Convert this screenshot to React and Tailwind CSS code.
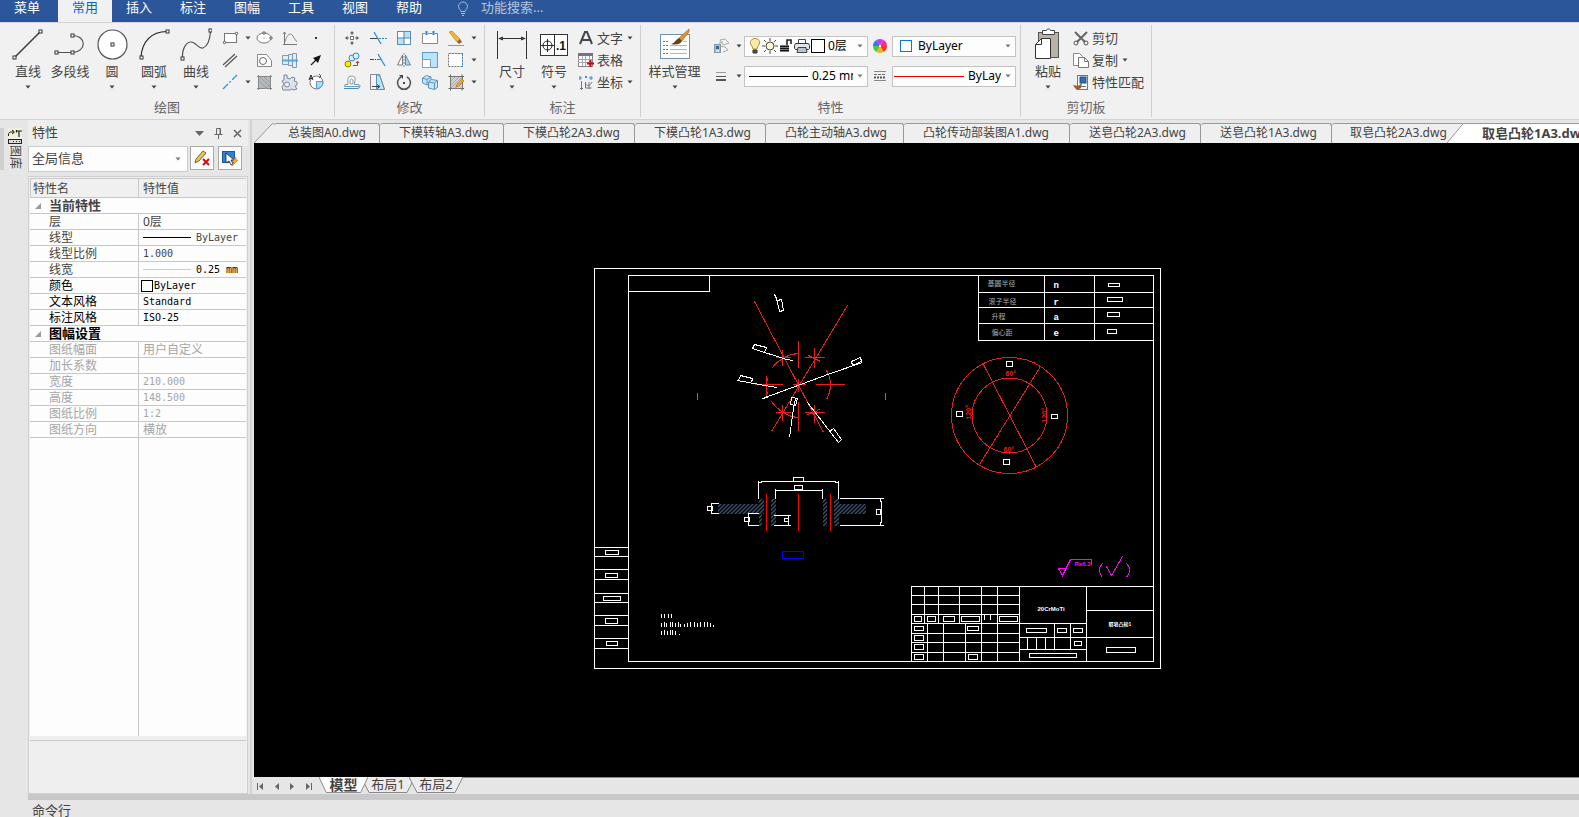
import { useState } from "react";

const Icon = ({ w = 18, h = 18, children }) => (
  <svg width={w} height={h} viewBox={`0 0 ${w} ${h}`} fill="none" stroke="#50555c" className="shrink-0" aria-hidden="true">
    {children}
  </svg>
);

const Caret = ({ color = "#444" }) => (
  <svg width="6" height="4" viewBox="0 0 6 4" className="shrink-0" aria-hidden="true">
    <path d="M.5 .5h5L3 3.500z" fill={color} />
  </svg>
);

const Node = ({ x, y }) => <rect x={x - 1.5} y={y - 1.5} width="3" height="3" fill="#fff" stroke="#333" strokeWidth="1" />;

/* ---------- ribbon icons ---------- */

const LineIcon = () => (
  <Icon w={32} h={34}>
    <path d="M3 30L29 4" stroke="#3c414a" strokeWidth="1.6" />
    <Node x={2.5} y={30.5} />
    <Node x={28.5} y={4.5} />
  </Icon>
);

const PolylineIcon = () => (
  <Icon w={32} h={34}>
    <path d="M2 25.500H18C33 25 33 8.500 18 8.500" strokeWidth="1.2" />
    <Node x={2.5} y={25.5} />
    <Node x={18.5} y={25.5} />
    <Node x={18.5} y={8.5} />
  </Icon>
);

const CircleIcon = () => (
  <Icon w={32} h={34}>
    <circle cx="16.500" cy="17.500" r="14.500" fill="#fff" strokeWidth="1.2" />
    <Node x={16.5} y={17.5} />
  </Icon>
);

const ArcIcon = () => (
  <Icon w={32} h={34}>
    <path d="M3 30C4 15 13 4.500 29 4.500" stroke="#222" strokeWidth="1.2" />
    <Node x={3.5} y={30.5} />
    <Node x={29.5} y={4.5} />
  </Icon>
);

const CurveIcon = () => (
  <Icon w={32} h={34}>
    <path d="M2.500 31C2 22 6 15 11 15C16 15 18 22 23 21C28 19 30 12 30.500 4" strokeWidth="1.2" />
    <Node x={2.5} y={31.5} />
    <Node x={30.5} y={3.5} />
  </Icon>
);

const RectIcon = () => (
  <Icon>
    <rect x="3.500" y="4.500" width="12" height="9" fill="#fff" stroke="#777" />
    <circle cx="3.500" cy="13.500" r="1.200" fill="#fff" />
    <circle cx="15.500" cy="4.500" r="1.200" fill="#fff" />
  </Icon>
);

const EllipseIcon = () => (
  <Icon>
    <ellipse cx="9" cy="9" rx="7" ry="5" fill="#fff" stroke="#777" />
    <circle cx="9" cy="4" r="1.200" fill="#fff" />
    <circle cx="16" cy="9" r="1.200" fill="#fff" />
    <path d="M9 8v2" stroke="#aaa" />
  </Icon>
);

const FormulaCurveIcon = () => (
  <Icon>
    <path d="M3.500 3v12.500M2 15.500h14" stroke="#777" />
    <path d="M4 13C6 5 10 2 13 9L16 13M2 5l1.500-2L5 5" stroke="#888" />
  </Icon>
);

const PointIcon = () => (
  <Icon>
    <rect x="8" y="8" width="2" height="2" fill="#333" stroke="none" />
  </Icon>
);

const ParallelIcon = () => (
  <Icon>
    <path d="M2 14L14 3M4 16L16 5" stroke="#555" strokeWidth="1.200" />
  </Icon>
);

const HoleIcon = () => (
  <Icon>
    <path d="M2.500 3.500h9l5 6v6h-14z" fill="#fff" stroke="#888" />
    <circle cx="8" cy="10" r="3.500" stroke="#666" />
  </Icon>
);

const ShaftIcon = () => (
  <Icon>
    <path d="M1.500 4.500h6v9h-6zM7.500 3.500h4v11h-4zM11.500 2.500h4v14h-4z" fill="#e4edf5" stroke="#7d9ab5" />
    <path d="M1 9.500h16" stroke="#58a6dc" strokeWidth="2" />
  </Icon>
);

const ArrowIcon = () => (
  <Icon>
    <path d="M4 14l5-5" stroke="#222" strokeWidth="1.300" />
    <path d="M14 4l-3 8-5-5z" fill="#111" stroke="none" />
  </Icon>
);

const CenterLineIcon = () => (
  <Icon>
    <path d="M2 16L16 2" stroke="#2e9ad6" strokeWidth="1.300" strokeDasharray="7 2 2 2" />
  </Icon>
);

const HatchIcon = () => (
  <Icon>
    <path d="M3.500 2v15M15.500 2v15M2 3.500h15M2 15.500h15" stroke="#888" />
    <rect x="4" y="4" width="11" height="11" fill="#b5b8bc" stroke="none" />
    <path d="M5 4l10 10M9 4l6 6M4 8l7 7M10 16l6-6" stroke="#9a9da2" />
  </Icon>
);

const GearIcon = () => (
  <Icon>
    <path
      d="M3 2h3v3l3 1 2-2 3 1-1 3 3 1v3l-2 1 2 3-3 1-2-1-2 1H2l-1-3 2-3-2-3 2-1z"
      fill="#d9e2ee"
      stroke="#7f8894"
    />
    <circle cx="6" cy="11.500" r="2.500" fill="#f1f1f1" stroke="#7f8894" />
  </Icon>
);

const RotatedViewIcon = () => (
  <Icon>
    <circle cx="9.500" cy="9.500" r="6.500" fill="#fff" stroke="#777" />
    <path d="M9.500 8.500h6c1 4-2 7-6 7z" fill="#a9dcf7" stroke="#5a9cc5" />
    <path d="M2 7l2-5 2 5M3 5.500h2" stroke="#222" />
    <path d="M12 1l2 2-2 2" stroke="#555" />
  </Icon>
);

const MoveIcon = () => (
  <Icon>
    <rect x="7.500" y="7.500" width="3" height="3" fill="#fff" stroke="#777" />
    <path d="M9 6V3M9 12v3M6 9H3M12 9h3" stroke="#666" />
    <path d="M9 2l2 2.500H7zM9 16l2-2.500H7zM2 9l2.500-2v4zM16 9l-2.500-2v4z" fill="#555" stroke="none" />
  </Icon>
);

const TrimIcon = () => (
  <Icon>
    <path d="M1 9.500h8" stroke="#444" />
    <path d="M10 9.500h8" stroke="#2e84d2" strokeDasharray="2 1" />
    <path d="M5 3l7 12" stroke="#2e84d2" strokeWidth="1.200" />
  </Icon>
);

const ArrayIcon = () => (
  <Icon>
    <rect x="2.500" y="2.500" width="13" height="13" fill="#fff" stroke="#5b8fb8" />
    <path d="M3 9h6v6H3zM9 3h6v6H9z" fill="#b8e2f8" stroke="none" />
    <path d="M9 2v14M2 9h14" stroke="#4c86b3" />
  </Icon>
);

const BreakIcon = () => (
  <Icon>
    <path d="M4 4.500H1.500v10h15v-10H14M7 4.500h4" fill="#fff" stroke="#888" />
    <path d="M5.500 2v4M12.500 2v4" stroke="#2e84d2" strokeWidth="2" />
  </Icon>
);

const EraseIcon = () => (
  <Icon>
    <path d="M1 16.500h16" stroke="#999" />
    <path d="M2 3l3-1 8 8-3 3z" fill="#f3b234" stroke="#b87b1c" strokeWidth=".6" />
    <path d="M10 13l3-3 2 3-3 2z" fill="#a05a3c" stroke="none" />
  </Icon>
);

const CopyObjIcon = () => (
  <Icon>
    <circle cx="5" cy="13" r="3" fill="#ffe600" stroke="#8a8200" />
    <circle cx="9" cy="7" r="3" fill="#d5efff" stroke="#3f87bd" />
    <circle cx="13" cy="5" r="3" fill="#d5efff" stroke="#3f87bd" />
    <path d="M10 14.500h4.500V11M13 12l1.500-2 1.500 2" stroke="#b33" />
  </Icon>
);

const ExtendIcon = () => (
  <Icon>
    <path d="M1 8.500h6M8 8.500h2" stroke="#444" strokeDasharray="4 1" />
    <path d="M9 8.500h3" stroke="#2e84d2" />
    <path d="M9 3l7 12" stroke="#2e84d2" strokeWidth="1.200" />
  </Icon>
);

const MirrorIcon = () => (
  <Icon>
    <path d="M7.500 4v10h-5z" fill="#fff" stroke="#777" />
    <path d="M10.500 4v10h5z" fill="#a9d4ee" stroke="#5b8fb8" />
    <path d="M9 2v14" stroke="#888" strokeDasharray="2 1" />
  </Icon>
);

const ScaleIcon = () => (
  <Icon>
    <rect x="1.500" y="1.500" width="15" height="15" fill="#b9e4f8" stroke="#5b9cc8" />
    <rect x="1.500" y="8.500" width="8" height="8" fill="#fff" stroke="#8a9fb0" />
  </Icon>
);

const StretchIcon = () => (
  <Icon>
    <rect x="1.500" y="2.500" width="14" height="13" fill="#fff" stroke="#777" strokeDasharray="2 1" />
    <path d="M2 2.500h14M15.500 3v13" stroke="#3a8fd0" strokeDasharray="2 1" />
  </Icon>
);

const OffsetIcon = () => (
  <Icon>
    <path d="M2 11.500h3c0-3-1-7 2-8s6 0 5 4l-1 4h5v2H1.500z" fill="#fff" stroke="#7d98ae" />
    <path d="M1 15.500h13c2 0 3-1 3-3" stroke="#3a8fd0" />
    <path d="M7 11c0-2 0-5 1.500-5s2 3 1 5z" stroke="#7d98ae" />
  </Icon>
);

const ChamferIcon = () => (
  <Icon>
    <path d="M1.500 1.500h9l5 15h-14z" fill="#f5f5f5" stroke="#888" />
    <path d="M7.500 2h3l5 14.500h-8z" fill="#b9e4f8" stroke="#5b8fb8" />
    <path d="M3 13.500h7M8 11.500l3 2-3 2" stroke="#444" />
  </Icon>
);

const RotateIcon = () => (
  <Icon>
    <path d="M12 4a6.500 6.500 0 1 1-6 0" stroke="#555" strokeWidth="1.600" />
    <path d="M4 2h4v4z" fill="#444" stroke="none" />
    <rect x="8" y="9" width="2" height="2" fill="#444" stroke="none" />
  </Icon>
);

const ExplodeIcon = () => (
  <Icon>
    <path d="M1.500 5l4-2.500L10 4v6l-4 2-4.500-2zM1.500 5L6 6.500v5M6 6.500L10 4" fill="#c6e6f8" stroke="#5b93bb" />
    <path d="M7.500 9l3-2.500 6 1v7l-3 2-6-1.500zM7.500 9l6 1v6M13.500 10l3-2.500" fill="#c6e6f8" stroke="#5b93bb" />
  </Icon>
);

const HatchEditIcon = () => (
  <Icon>
    <rect x="3.500" y="3.500" width="12" height="12" fill="#cfd1d3" stroke="#777" />
    <path d="M4 8l4-4M4 12l8-8M4 15L15 4M8 15l7-7" stroke="#a5a5a5" />
    <path d="M1.500 3.500h2v-2M1.500 15.500h2v2M17 3.500h-2v-2M17 15.500h-2v2" stroke="#666" />
    <path d="M10 11l5-5 2 2-5 5-3 1z" fill="#e8a63a" stroke="#9a6b1e" strokeWidth=".6" />
  </Icon>
);

const DimensionIcon = () => (
  <Icon w={32} h={34}>
    <path d="M1.500 4v28M30.500 4v28M3 11.500h26" stroke="#333" />
    <path d="M2 11.500l5-2v4zM30 11.500l-5-2v4z" fill="#333" stroke="none" />
  </Icon>
);

const SymbolIcon = () => (
  <Icon w={30} h={34}>
    <rect x="1.500" y="7.500" width="27" height="21" fill="#fff" stroke="#333" />
    <path d="M15.500 8v20M2 18.500h13M8.500 12v13" stroke="#333" />
    <circle cx="8.500" cy="18.500" r="4.500" stroke="#222" />
    <text x="17" y="23" fill="#111" stroke="none" fontSize="12" fontWeight="700" fontFamily="Liberation Sans, sans-serif">
      .1
    </text>
  </Icon>
);

const TextIcon = () => (
  <Icon>
    <path d="M3 15L8 3h2l5 12M5 11h8" stroke="#43474f" strokeWidth="2" />
  </Icon>
);

const TableIcon = () => (
  <Icon>
    <rect x="1.500" y="2.500" width="14" height="13" fill="#fff" stroke="#888" />
    <path d="M1 2h15v3H1z" fill="#6d7682" stroke="none" />
    <path d="M1 8.500h14M1 11.500h14M5.500 5v10M8.500 5v10M12.500 5v10" stroke="#aaa" />
    <path d="M13.500 9v7M10 12.500h7" stroke="#c00d0d" strokeWidth="2" />
  </Icon>
);

const CoordIcon = () => (
  <Icon>
    <path d="M4.500 8v9M3 15.500h3M8.500 9v6h6M8 10c2 4 5 3 7-1M12 9v7" stroke="#777" />
    <path d="M2 5h3M3 3v4M8 3l2 2M10 3L8 5M14 3v4M12 5h4" stroke="#3a8fd0" />
  </Icon>
);

const StyleIcon = () => (
  <Icon w={32} h={34}>
    <rect x="1.500" y="7.500" width="29" height="24" fill="#fff" stroke="#6f93b3" />
    <path d="M4 14.500h5M4 18.500h5M4 22.500h5M4 26.500h5" stroke="#777" strokeDasharray="2 1" />
    <path d="M11 18.500h17M11 22.500h17M11 26.500h17M24 14.500h4" stroke="#a9bccd" />
    <path d="M30 2L20 11l3 3 7-9z" fill="#e0932f" stroke="#9a5f1c" strokeWidth=".6" />
    <path d="M20 11l3 3c-2 4-7 4-11 3 4-1 4-4 8-6z" fill="#6b3f1d" stroke="none" />
  </Icon>
);

const LayersIcon = () => (
  <Icon>
    <path d="M8 3l5-1 4 4-6 2zM7 6l4-1M7 9l6 1 3 3-5 2" fill="#f4f4f4" stroke="#aaa" />
    <rect x="2.500" y="7.500" width="6" height="8" fill="#a9bfd4" stroke="#8796a5" />
    <rect x="4" y="9" width="3" height="3" fill="#2d6aa3" stroke="none" />
    <path d="M4 14h3" stroke="#fff" />
  </Icon>
);

const LineWidthIcon = () => (
  <Icon>
    <path d="M4 5.500h10" stroke="#999" />
    <path d="M4 9.500h10" stroke="#555" />
    <path d="M4 13h10" stroke="#555" strokeWidth="2" />
  </Icon>
);

const BulbIcon = () => (
  <Icon w={12}>
    <path d="M6 1.500c6 0 5 6 3 7.500l-1 3H4L3 9C0 7 1 1.500 6 1.500z" fill="#ffe9a0" stroke="#a98f45" />
    <path d="M4 13h4v3H4z" fill="#555" stroke="#333" />
  </Icon>
);

const SunIcon = () => (
  <Icon w={16}>
    <circle cx="8" cy="9" r="4" fill="#fff6cf" stroke="#444" />
    <path d="M8 1v3M8 14v3M0 9h3M13 9h3M2 3l2 2M12 13l2 2M14 3l-2 2M2 15l2-2" stroke="#444" />
  </Icon>
);

const UnlockIcon = () => (
  <Icon w={14}>
    <path d="M8 9V3h4v4" stroke="#222" strokeWidth="1.600" />
    <path d="M1 8h9v7H1z" fill="#8d8d00" stroke="none" />
    <path d="M1 9.500h9M1 11.500h9M1 13.500h9" stroke="#111" />
  </Icon>
);

const PrinterIcon = () => (
  <Icon w={16}>
    <path d="M4.500 6V2.500h7V6" fill="#fff" stroke="#444" />
    <path d="M1.500 6.500h13l1 2v3l-1 1h-13l-1-1v-3z" fill="#dfe5ec" stroke="#333" />
    <path d="M4 10.500h8l1 5H3z" fill="#b8c4d0" stroke="#444" />
  </Icon>
);

const ColorWheelIcon = () => (
  <Icon w={16} h={16}>
    <g stroke="none">
      <path d="M8 8L4.500 2a7 7 0 0 1 7 0z" fill="#c93bf0" />
      <path d="M8 8L11.500 2A7 7 0 0 1 15 8z" fill="#f0308c" />
      <path d="M8 8h7a7 7 0 0 1-3.500 6z" fill="#f23a24" />
      <path d="M8 8l3.500 6a7 7 0 0 1-7 0z" fill="#f5b01e" />
      <path d="M8 8l-3.500 6A7 7 0 0 1 1 8z" fill="#4fc73f" />
      <path d="M8 8H1a7 7 0 0 1 3.500-6z" fill="#3a74f0" />
      <circle cx="8" cy="8" r="1" fill="#fff" />
    </g>
  </Icon>
);

const LineTypeIcon = () => (
  <Icon w={16} h={16}>
    <path d="M2 3.500h12M2 12.500h12" stroke="#888" />
    <path d="M2 6.500h12" stroke="#666" strokeDasharray="3 1" />
    <path d="M2 9.500h12" stroke="#555" strokeWidth="2" strokeDasharray="2 1" />
  </Icon>
);

const PasteIcon = () => (
  <Icon w={30} h={34}>
    <rect x="5.500" y="5.500" width="20" height="25" fill="#b9b2a4" stroke="#555" />
    <path d="M9.500 3.500h4c0-2 4-2 4 0h4v4h-12z" fill="#fff" stroke="#444" />
    <path d="M2.500 17.500l6-6h9v20h-15z" fill="#fff" stroke="#333" />
    <path d="M2.500 17.500h6v-6" stroke="#333" />
  </Icon>
);

const CutIcon = () => (
  <Icon>
    <path d="M3 3l10 10M15 3L5 13" stroke="#666" strokeWidth="2" />
    <circle cx="4" cy="14" r="2" stroke="#555" />
    <circle cx="14" cy="14" r="2" stroke="#555" />
  </Icon>
);

const CopyIcon = () => (
  <Icon>
    <path d="M1.500 2.500h6l3 3v9h-9z" fill="#fff" stroke="#888" />
    <path d="M6.500 6.500h6l4 4v6h-10z" fill="#fff" stroke="#777" />
    <path d="M12.500 6.500v4h4" stroke="#777" />
  </Icon>
);

const MatchIcon = () => (
  <Icon>
    <rect x="5.500" y="2.500" width="10" height="14" fill="#fff" stroke="#6d7682" />
    <rect x="8" y="4" width="6" height="6" fill="#2f6fae" stroke="#1f4f80" />
    <path d="M8 13.500h6" stroke="#777" />
    <path d="M1 12l5 1 4-3-1 5-4 2-2-2z" fill="#a4592b" stroke="none" />
  </Icon>
);

/* ---------- ribbon building blocks ---------- */

const BigButton = ({ icon, label, caret = true, className = "w-[42px]" }) => (
  <button type="button" className={`flex h-[68px] flex-col items-center whitespace-nowrap ${className}`}>
    <span className="flex h-[34px] items-center">{icon}</span>
    <span className="leading-5">{label}</span>
    {caret && (
      <span className="mt-1">
        <Caret />
      </span>
    )}
  </button>
);

const SmallButton = ({ icon, title, caret }) => (
  <button type="button" title={title} aria-label={title} className="flex h-[22px] items-center gap-[6px] pl-1">
    {icon}
    {caret && <Caret />}
  </button>
);

const LabelButton = ({ icon, label, caret }) => (
  <button type="button" className="flex h-[22px] items-center gap-[2px] whitespace-nowrap">
    {icon}
    <span className="leading-5">{label}</span>
    {caret && (
      <span className="ml-[2px]">
        <Caret />
      </span>
    )}
  </button>
);

const Group = ({ title, className, children }) => (
  <section aria-label={title} className={`my-[2px] flex shrink-0 flex-col border-r border-[#d0d0d0] ${className}`}>
    <div className="flex flex-1 items-start pt-[2px]">{children}</div>
    <div className="h-5 text-center leading-5 text-[#666]">{title}</div>
  </section>
);

const Combo = ({ label, options, children }) => (
  <div className="flex h-[21px] w-[124px] items-center overflow-hidden border border-[#c3c3c3] bg-[#fdfdfd] pr-1 text-xs text-black">
    {children}
    <select aria-label={label} className="mr-1 h-[19px] w-0 min-w-0 flex-1 appearance-none bg-transparent pl-[3px] outline-none">
      {options.map((o) => (
        <option key={o}>{o}</option>
      ))}
    </select>
    <Caret color="#777" />
  </div>
);

const menus = ["菜单", "常用", "插入", "标注", "图幅", "工具", "视图", "帮助"];

const MenuBar = () => {
  const [active, setActive] = useState("常用");

  return (
    <header className="flex h-[22px] shrink-0 items-start overflow-hidden bg-[#2b579a]">
      <nav className="flex">
        {menus.map((m) => (
          <button
            key={m}
            type="button"
            onClick={() => setActive(m)}
            className={`h-[22px] w-[54px] pb-2 text-center leading-[14px] ${m === "菜单" ? "mr-1" : ""} ${
              active === m ? "bg-[#f1f1f1] text-[#0a64c8]" : "text-white"
            }`}
          >
            {m}
          </button>
        ))}
      </nav>
      <label className="ml-5 flex h-4 flex-1 items-center gap-[11px] text-[#b5c5de]">
        <svg width="14" height="16" viewBox="0 0 14 16" fill="none" stroke="#a9bcd9" className="shrink-0">
          <path d="M5 11.500C5 10 2.500 9 2.500 6.500a4.500 4.500 0 0 1 9 0C11.500 9 9 10 9 11.500zM5 13.500h4M6 15.500h2" />
        </svg>
        <input
          aria-label="功能搜索"
          placeholder="功能搜索..."
          className="h-4 w-40 bg-transparent outline-none placeholder:text-[#b5c5de]"
        />
      </label>
    </header>
  );
};

const Ribbon = () => (
  <div className="flex h-[98px] shrink-0 overflow-hidden border-y border-[#d4d4d4] bg-[#f1f1f1]">
    <Group title="绘图" className="w-[335px]">
      <div className="flex pl-[7px]">
        <BigButton icon={<LineIcon />} label="直线" />
        <BigButton icon={<PolylineIcon />} label="多段线" caret={false} />
        <BigButton icon={<CircleIcon />} label="圆" />
        <BigButton icon={<ArcIcon />} label="圆弧" />
        <BigButton icon={<CurveIcon />} label="曲线" />
      </div>
      <div className="grid grid-cols-[34px_26px_26px_26px]">
        <SmallButton icon={<RectIcon />} title="矩形" caret />
        <SmallButton icon={<EllipseIcon />} title="椭圆" />
        <SmallButton icon={<FormulaCurveIcon />} title="公式曲线" />
        <SmallButton icon={<PointIcon />} title="点" />
        <SmallButton icon={<ParallelIcon />} title="平行线" />
        <SmallButton icon={<HoleIcon />} title="局部放大" />
        <SmallButton icon={<ShaftIcon />} title="孔/轴" />
        <SmallButton icon={<ArrowIcon />} title="箭头" />
        <SmallButton icon={<CenterLineIcon />} title="中心线" caret />
        <SmallButton icon={<HatchIcon />} title="剖面线" />
        <SmallButton icon={<GearIcon />} title="齿轮" />
        <SmallButton icon={<RotatedViewIcon />} title="视图" />
      </div>
    </Group>

    <Group title="修改" className="w-[150px]">
      <div className="grid grid-cols-[26px_26px_26px_26px_36px] pl-1">
        <SmallButton icon={<MoveIcon />} title="平移" />
        <SmallButton icon={<TrimIcon />} title="裁剪" />
        <SmallButton icon={<ArrayIcon />} title="阵列" />
        <SmallButton icon={<BreakIcon />} title="打断" />
        <SmallButton icon={<EraseIcon />} title="删除" caret />
        <SmallButton icon={<CopyObjIcon />} title="平移复制" />
        <SmallButton icon={<ExtendIcon />} title="延伸" />
        <SmallButton icon={<MirrorIcon />} title="镜像" />
        <SmallButton icon={<ScaleIcon />} title="缩放" />
        <SmallButton icon={<StretchIcon />} title="拉伸" caret />
        <SmallButton icon={<OffsetIcon />} title="等距线" />
        <SmallButton icon={<ChamferIcon />} title="过渡" />
        <SmallButton icon={<RotateIcon />} title="旋转" />
        <SmallButton icon={<ExplodeIcon />} title="分解" />
        <SmallButton icon={<HatchEditIcon />} title="编辑" caret />
      </div>
    </Group>

    <Group title="标注" className="w-[156px]">
      <div className="flex pl-[6px]">
        <BigButton icon={<DimensionIcon />} label="尺寸" />
        <BigButton icon={<SymbolIcon />} label="符号" />
      </div>
      <div className="flex flex-col pl-[2px]">
        <LabelButton icon={<TextIcon />} label="文字" caret />
        <LabelButton icon={<TableIcon />} label="表格" />
        <LabelButton icon={<CoordIcon />} label="坐标" caret />
      </div>
    </Group>

    <Group title="特性" className="w-[380px]">
      <BigButton icon={<StyleIcon />} label="样式管理" className="w-[67px]" />
      <div className="grid grid-cols-[36px_124px_24px_124px] items-center gap-y-2 pt-2">
        <SmallButton icon={<LayersIcon />} title="图层" caret />
        <Combo label="图层选择" options={["0层"]}>
          <span className="flex items-center gap-[1px] pl-1">
            <BulbIcon />
            <SunIcon />
            <UnlockIcon />
            <PrinterIcon />
            <span className="size-[14px] border border-black bg-white" />
          </span>
        </Combo>
        <span className="flex justify-center">
          <ColorWheelIcon />
        </span>
        <Combo label="颜色" options={["ByLayer"]}>
          <span className="mr-[3px] ml-[7px] size-3 shrink-0 border border-[#0a78d7] bg-white" />
        </Combo>
        <SmallButton icon={<LineWidthIcon />} title="线宽" caret />
        <Combo label="线宽选择" options={["0.25 mm"]}>
          <span className="mr-[1px] ml-1 h-px w-[59px] shrink-0 bg-black" />
        </Combo>
        <span className="flex justify-center">
          <LineTypeIcon />
        </span>
        <Combo label="线型" options={["ByLayer"]}>
          <span className="mr-[1px] ml-[1px] h-px w-[70px] shrink-0 bg-[#e00]" />
        </Combo>
      </div>
    </Group>

    <Group title="剪切板" className="w-[131px]">
      <BigButton icon={<PasteIcon />} label="粘贴" className="w-[51px] pl-[3px]" />
      <div className="flex flex-col">
        <LabelButton icon={<CutIcon />} label="剪切" />
        <LabelButton icon={<CopyIcon />} label="复制" caret />
        <LabelButton icon={<MatchIcon />} label="特性匹配" />
      </div>
    </Group>
  </div>
);

/* ---------- property panel ---------- */

const currentProps = [
  { name: "层", value: "0层", tone: "text-[#444]" },
  { name: "线型", value: "ByLayer", tone: "text-[#444]", line: "bg-black" },
  { name: "线型比例", value: "1.000", tone: "text-[#444]" },
  { name: "线宽", value: "0.25 mm", tone: "text-[#444]", valueTone: "text-black", line: "bg-[#ccc]" },
  { name: "颜色", value: "ByLayer", tone: "text-black", swatch: true },
  { name: "文本风格", value: "Standard", tone: "text-black" },
  { name: "标注风格", value: "ISO-25", tone: "text-black" },
];

const sheetProps = [
  { name: "图纸幅面", value: "用户自定义" },
  { name: "加长系数", value: "" },
  { name: "宽度", value: "210.000" },
  { name: "高度", value: "148.500" },
  { name: "图纸比例", value: "1:2" },
  { name: "图纸方向", value: "横放" },
];

const hasLatin = (v) => /^[\x20-\x7e]+$/.test(v);

const PropRow = ({ row }) => (
  <tr className={row.tone || "text-[#a5a5a5]"}>
    <th scope="row" className="h-4 border-r border-b border-[#c8c8c8] pl-[19px] text-left font-normal">
      {row.name}
    </th>
    <td className={`h-4 border-b border-[#c8c8c8] pl-1 ${row.valueTone || ""}`}>
      <span className="flex h-[15px] items-center">
        {row.line && <span className={`mr-[5px] h-px w-12 ${row.line}`} />}
        {row.swatch && <span className="mr-[1px] -ml-[2px] size-3 border border-black bg-white" />}
        <span className={hasLatin(row.value) ? "font-['DejaVu_Sans_Mono',monospace] text-[10px]" : ""}>{row.value}</span>
      </span>
    </td>
  </tr>
);

const SectionRow = ({ title, tone }) => (
  <tr className={tone}>
    <th colSpan={2} scope="colgroup" className="h-4 border-b border-[#c8c8c8] pl-[5px] text-left text-[13px]">
      <span className="flex h-[15px] items-center gap-2">
        <svg width="6" height="6" viewBox="0 0 6 6">
          <path d="M6 0v6H0z" fill="#999" />
        </svg>
        {title}
      </span>
    </th>
  </tr>
);

const PropertyPanel = () => (
  <aside className="flex w-[220px] shrink-0 flex-col">
    <div className="flex h-[26px] items-center bg-[#eee] pr-[6px] pl-1">
      <h2 className="flex-1 text-[#444]">特性</h2>
      <button type="button" aria-label="菜单" className="mr-[9px]">
        <svg width="10" height="5" viewBox="0 0 10 5">
          <path d="M0 0h9L4.500 5z" fill="#666" />
        </svg>
      </button>
      <button type="button" aria-label="固定" className="mr-[10px]">
        <svg width="9" height="11" viewBox="0 0 9 11" fill="none" stroke="#666">
          <path d="M2.500 6V.5h4V6M6 1v5M.5 6.500h8M4.500 7v4" />
        </svg>
      </button>
      <button type="button" aria-label="关闭">
        <svg width="9" height="9" viewBox="0 0 9 9" fill="none" stroke="#666" strokeWidth="1.600">
          <path d="M1 1l7 7M8 1L1 8" />
        </svg>
      </button>
    </div>

    <div className="flex h-[30px] items-start gap-[2px]">
      <div className="flex h-[26px] w-[160px] items-center border border-[#ccc] bg-[#fdfdfd] pr-[6px]">
        <select aria-label="选择集" className="min-w-0 flex-1 appearance-none bg-transparent pl-[3px] text-[#444] outline-none">
          <option>全局信息</option>
        </select>
        <Caret color="#777" />
      </div>
      <button type="button" aria-label="取消选择" className="grid size-6 place-items-center border border-[#aaa] bg-[#fdfdfd]">
        <Icon>
          <path d="M2 14l1-4 7-8 3 2-7 8z" fill="#f2c14e" stroke="#5a4520" strokeWidth=".8" />
          <path d="M10 10l6 6M16 10l-6 6" stroke="#d01010" strokeWidth="2" />
        </Icon>
      </button>
      <button type="button" aria-label="快速选择" className="ml-[2px] grid size-6 place-items-center border border-[#aaa] bg-[#fdfdfd]">
        <Icon>
          <rect x="1.500" y="2.500" width="12" height="11" fill="#2f80d0" stroke="#1c5c9c" />
          <path d="M5 4v10l3-2 2 4 2-1-2-4h3z" fill="#fff" stroke="#222" strokeWidth=".8" />
          <path d="M15 8l-4 5h2l-2 4 6-6h-2z" fill="#ffb020" stroke="#d07810" strokeWidth=".6" />
        </Icon>
      </button>
    </div>

    <div className="flex flex-1 flex-col border border-[#d0d0d0] bg-[#efefef] p-[1px] text-xs leading-[15px]">
      <table className="w-full table-fixed border-separate border-spacing-0 bg-[#fdfdfd]">
        <colgroup>
          <col className="w-[109px]" />
          <col />
        </colgroup>
        <thead>
          <tr className="bg-[#f0f0f0] text-[#444]">
            <th scope="col" className="h-5 border border-[#c8c8c8] pl-[2px] text-left font-normal">
              特性名
            </th>
            <th scope="col" className="h-5 border-y border-[#c8c8c8] pl-1 text-left font-normal">
              特性值
            </th>
          </tr>
        </thead>
        <tbody>
          <SectionRow title="当前特性" tone="text-[#444]" />
          {currentProps.map((row) => (
            <PropRow key={row.name} row={row} />
          ))}
          <SectionRow title="图幅设置" tone="text-black" />
          {sheetProps.map((row) => (
            <PropRow key={row.name} row={row} />
          ))}
        </tbody>
      </table>
      <div className="flex flex-1 bg-[#fdfdfd]">
        <div className="w-[109px] border-r border-[#c8c8c8]" />
      </div>
      <div className="mt-1 h-[52px] border-t border-[#c8c8c8]" />
    </div>
  </aside>
);

const SideStrip = () => (
  <div className="flex w-7 shrink-0 items-start gap-1 pt-2">
    <span className="h-[42px] w-1 bg-[#cfcfcf]" />
    <button type="button" className="flex w-[14px] flex-col items-center gap-[1px]">
      <svg width="14" height="16" viewBox="0 0 14 16" fill="none" stroke="#222" className="bg-[#f0f0dc]">
        <path d="M.5 8V5.500L2 4h4M4 2l2.500 2L4 6" />
        <path d="M8 3h6M11 3v6M8.500 2v2.500" strokeWidth="1.200" />
        <rect x=".5" y="11.500" width="13" height="4" fill="#ddd" />
        <path d="M5 13.500h1M8 13.500h1M11 13.500h1" />
      </svg>
      <span className="w-[14px] text-xs leading-[14px] text-[#444] [text-orientation:sideways] [writing-mode:vertical-rl]">图库</span>
    </button>
  </div>
);

/* ---------- document area ---------- */

const docs = [
  { name: "总装图A0.dwg", width: "w-[106px]", pad: "pl-[14px]" },
  { name: "下模转轴A3.dwg", width: "w-[124px]", pad: "pl-[19px]" },
  { name: "下模凸轮2A3.dwg", width: "w-[131px]", pad: "pl-[19px]" },
  { name: "下模凸轮1A3.dwg", width: "w-[131px]", pad: "pl-[19px]" },
  { name: "凸轮主动轴A3.dwg", width: "w-[138px]", pad: "pl-[19px]" },
  { name: "凸轮传动部装图A1.dwg", width: "w-[166px]", pad: "pl-[19px]" },
  { name: "送皂凸轮2A3.dwg", width: "w-[131px]", pad: "pl-[19px]" },
  { name: "送皂凸轮1A3.dwg", width: "w-[131px]", pad: "pl-[19px]" },
  { name: "取皂凸轮2A3.dwg", width: "w-[115px]", pad: "pl-[18px]", last: true },
];

const DocTabs = () => (
  <div className="flex h-[23px] shrink-0 items-end overflow-hidden text-[#444]">
    <svg width="20" height="20" viewBox="0 0 20 20" className="shrink-0">
      <path d="M0 20L17 2Q18 .5 20 .5V20z" fill="#efefef" />
      <path d="M0 20L17 2Q18 .5 20 .5" fill="none" stroke="#999" />
    </svg>
    {docs.map((d) => (
      <button
        key={d.name}
        type="button"
        className={`h-5 shrink-0 border-t border-[#999] bg-[#efefef] pb-[2px] text-left text-xs whitespace-nowrap ${d.width} ${d.pad} ${
          d.last ? "rounded-tl-[3px]" : "rounded-t-[3px] border-r"
        }`}
      >
        {d.name}
      </button>
    ))}
    <svg width="18" height="20" viewBox="0 0 18 20" className="shrink-0">
      <path d="M0 .5H18V20H0z" fill="#efefef" />
      <path d="M0 20L15 2Q16 .5 18 .5V20z" fill="#fff" />
      <path d="M0 .5h16M0 20L15 2Q16 .5 18 .5" fill="none" stroke="#999" />
    </svg>
    <button type="button" className="h-5 flex-1 border-t border-[#999] bg-white pb-[2px] pl-[17px] text-left font-bold whitespace-nowrap">
      取皂凸轮1A3.dwg
    </button>
  </div>
);

// [x, y, w, h] in drawing units
const Boxes = ({ items }) => items.map(([x, y, w, h]) => <rect key={`${x}-${y}`} x={x} y={y} width={w} height={h} />);

const Drawing = () => (
  <svg
    viewBox="254 143 1325 634"
    className="block h-full w-full"
    fill="none"
    stroke="#fff"
    shapeRendering="crispEdges"
    role="img"
    aria-label="取皂凸轮1A3.dwg"
  >
    <defs>
      <pattern id="hatch" width="4" height="4" patternUnits="userSpaceOnUse">
        <path d="M-1 5L5 -1M-1 1L1 -1M3 5L5 3" stroke="#6aa3dc" strokeWidth="1" />
      </pattern>
    </defs>
    <g transform="translate(0.5 0.5)">
      {/* frames */}
      <rect x="594" y="268" width="566" height="400" />
      <rect x="628" y="275" width="525" height="386" />
      <path d="M628 291H709V275" />
      <path d="M594 547h34M594 556h34M594 569h34M594 579h34M594 593h34M594 602h34M594 615h34M594 625h34M594 638h34M594 648h34" />
      <Boxes
        items={[
          [605, 550, 13, 4],
          [605, 573, 12, 4],
          [603, 596, 17, 4],
          [605, 618, 12, 5],
          [606, 641, 11, 4],
        ]}
      />

      {/* cam parameters */}
      <path d="M978 275V340H1153M978 292H1153M978 307H1153M978 323H1153M1044 275V340M1094 275V340" />
      <Boxes
        items={[
          [1108, 283, 11, 3],
          [1107, 297, 15, 4],
          [1107, 312, 12, 4],
          [1107, 329, 9, 4],
        ]}
      />
      <g fill="#aaa" stroke="none" fontSize="7" fontFamily="Liberation Serif, Noto Sans CJK SC, serif">
        <text x="987" y="285">基圆半径</text>
        <text x="988" y="303">滚子半径</text>
        <text x="991" y="318">升程</text>
        <text x="991" y="334">偏心距</text>
      </g>
      <g fill="#fff" stroke="none" fontSize="9" fontWeight="700" fontFamily="Liberation Mono, monospace">
        <text x="1053" y="287">n</text>
        <text x="1053" y="304">r</text>
        <text x="1053" y="319">a</text>
        <text x="1053" y="335">e</text>
      </g>

      {/* cam profile */}
      <g stroke="#f01a1a">
        <path d="M754 301L823 432M847 305L771 431M798 340V367M798 378V391M792 384H805M798 401V430" />
        <path d="M775 357H790M782 349V365M804 357H824M814 347V367M754 384H782M766 375V395M815 384H844" />
        <path d="M775 412H790M782 404V420M804 412H824M814 404V422" />
        <path d="M771 368Q782 354 798 353M826 370Q834 384 826 399M771 401Q782 416 798 417" />
        <path d="M808 355L820 361M820 408L814 412L807 414M767 378Q765 386 767 394" />
      </g>
      <path d="M774 294L776 298L779 311L783 310L781 299L777 300" />
      <path d="M793 360L786 359L752 348L754 344L766 347L764 352" />
      <path d="M777 387L770 386L737 380H738L740 375L752 378L751 382" />
      <path d="M768 397L762 398L830 373L862 362M851 361L860 357L861 361L852 365Z" />
      <path d="M795 398L793 408L789 437M791 397L797 398L795 405L790 404Z" />
      <path d="M807 402L838 442L841 439L833 428L829 431" />
      <path d="M697 392V399M885 392V399" stroke="#c86400" />

      {/* stroke diagram */}
      <g stroke="#f01a1a">
        <circle cx="1009" cy="415" r="58" />
        <circle cx="1009" cy="415" r="37.500" />
        <path d="M983 364L1036 467M1040 366L979 464" />
      </g>
      <Boxes
        items={[
          [1006, 361, 6, 5],
          [956, 411, 6, 5],
          [1051, 414, 6, 4],
          [1003, 459, 6, 5],
        ]}
      />
      <g fill="#f01a1a" stroke="none" fontSize="7" fontWeight="700" fontFamily="Liberation Sans, sans-serif">
        <text x="1005" y="375">60°</text>
        <text x="1003" y="451">60°</text>
        <text transform="translate(970 419) rotate(-90)">120°</text>
        <text transform="translate(1046 422) rotate(-90)">120°</text>
      </g>

      {/* section */}
      <path
        d="M717 503H763V513H717zM758 498H763V503H758zM758 513H761V525H758zM770 498H775V525H770zM822 498H826V525H822zM833 498H838V525H833zM838 503H865V513H838z"
        fill="url(#hatch)"
        stroke="none"
      />
      <path d="M758 498V480M758 482h3v-1h74v1h3M838 480V498M775 498V488M775 490H822M822 488V498" />
      <path d="M710 503h8M710 513h8M711 503v10M747 513h11M747 525h11M748 513v12M773 515h17M773 525h17M788 515v10" />
      <path d="M839 498h44M839 525h44M880 498v3h1v21h-1v3" />
      <Boxes
        items={[
          [793, 477, 10, 4],
          [794, 485, 8, 4],
          [707, 506, 5, 4],
          [744, 517, 5, 4],
          [784, 518, 4, 3],
          [876, 509, 4, 5],
        ]}
      />
      <path d="M766 493V530M798 493V530M830 493V530" stroke="#f00" />
      <rect x="782" y="551" width="21" height="7" stroke="#00f" />

      {/* roughness mark */}
      <g stroke="#f0f">
        <path d="M1065 568H1058L1062 575L1070 559H1091V564" />
        <path d="M1102 563L1099 567V572L1102 577M1106 566L1111 575L1122 556M1126 563L1129 567V572L1126 577" />
        <text x="1074" y="565" fill="#f0f" stroke="none" fontSize="6" fontWeight="700" fontFamily="Liberation Sans, sans-serif">
          Ra6.3
        </text>
      </g>

      {/* technical notes */}
      <path d="M661 613v4M664 613v4M668 613v4M671 613v4" />
      <path d="M661 622v4M664 621v5M666 622v4M670 621v5M672 621v5M675 622v4M678 621v5M680 623v3M684 623v3M687 622v4M690 621v5M694 621v5M697 622v4M700 621v5M704 621v5M707 621v5M710 622v4M713 624v2" />
      <path d="M661 630v4M664 629v5M667 630v4M670 629v5M672 629v5M675 630v4M679 633v1" />

      {/* title block */}
      <path d="M911 661V586H1153M1019 586V661M1086 586V661" />
      <path d="M911 595H1019M911 604H1019M911 614H1019M911 623H1086M911 633H1019M911 642H1019M911 652H1019" />
      <path d="M924 586V623M938 586V623M959 586V623M981 586V661M997 586V661M927 623V661M943 623V661M965 623V661" />
      <path d="M984 613v6M990 613v6M1019 637H1153M1019 649H1086M1054 623V649M1070 623V649M1027 637v12M1036 637v12M1045 637v12M1086 610H1153" />
      <Boxes
        items={[
          [914, 616, 7, 5],
          [927, 616, 8, 5],
          [943, 616, 11, 5],
          [961, 616, 18, 5],
          [999, 616, 18, 5],
          [914, 626, 9, 4],
          [914, 635, 9, 5],
          [914, 644, 9, 5],
          [914, 654, 9, 5],
          [967, 626, 11, 4],
          [968, 654, 9, 5],
          [1026, 628, 20, 4],
          [1057, 628, 9, 4],
          [1073, 628, 9, 4],
          [1074, 641, 7, 4],
          [1029, 653, 47, 4],
          [1106, 647, 29, 5],
        ]}
      />
      <g fill="#fff" stroke="none" fontWeight="700" fontFamily="Liberation Sans, Noto Sans CJK SC, sans-serif">
        <text x="1037" y="610" fontSize="6">20CrMoTi</text>
        <text x="1108" y="625" fontSize="5">取皂凸轮1</text>
      </g>
    </g>
  </svg>
);

const layoutTabs = [
  { name: "模型", className: "z-10 w-[49px] text-sm leading-[15px] font-bold" },
  { name: "布局1", className: "-ml-[7px] w-[54px] leading-[15px]" },
  { name: "布局2", className: "-ml-[6px] w-[54px] leading-[15px]" },
];

const LayoutTabs = () => (
  <div className="flex h-[17px] shrink-0 items-start">
    <div className="flex h-[17px] w-[65px] items-center justify-between pt-[2px] pr-[7px] pl-[3px]">
      {["首页", "上一页", "下一页", "末页"].map((t, i) => (
        <button key={t} type="button" aria-label={t}>
          <svg width="7" height="7" viewBox="0 0 7 7" fill="#666" className="block">
            {i < 2 ? <path d="M6 0v7L2 3.500z" /> : <path d="M1 0v7l4-3.500z" />}
            {i === 0 && <path d="M0 0h1v7H0z" />}
            {i === 3 && <path d="M6 0h1v7H6z" />}
          </svg>
        </button>
      ))}
    </div>
    {layoutTabs.map((t, i) => (
      <button key={t.name} type="button" className={`relative h-4 pb-px ${t.className}`}>
        <svg viewBox="0 0 54 16" preserveAspectRatio="none" className="absolute inset-0 h-full w-full" aria-hidden="true">
          <path d="M0 0L8 15.500H46L54 0" fill={i === 0 ? "#fff" : "#ececec"} stroke="#888" />
        </svg>
        <span className="relative text-[#444]">{t.name}</span>
      </button>
    ))}
    <span className="h-px flex-1 bg-[#888]" />
  </div>
);

export default function App() {
  return (
    <div className="flex h-screen flex-col overflow-hidden bg-[#e6e6e6] font-['Noto_Sans','Noto_Sans_CJK_SC',sans-serif] text-[13px] text-[#444]">
      <MenuBar />
      <Ribbon />
      <main className="flex min-h-0 flex-1">
        <SideStrip />
        <PropertyPanel />
        <div className="mx-[2px] w-[2px] shrink-0 bg-[#d2d2d2]" />
        <div className="flex min-w-0 flex-1 flex-col">
          <DocTabs />
          <div className="min-h-0 flex-1 bg-black">
            <Drawing />
          </div>
          <LayoutTabs />
        </div>
      </main>
      <div className="ml-7 h-[6px] shrink-0 bg-[#c8c8c8]" />
      <footer className="h-[17px] shrink-0 overflow-hidden pl-8 leading-5">命令行</footer>
    </div>
  );
}
